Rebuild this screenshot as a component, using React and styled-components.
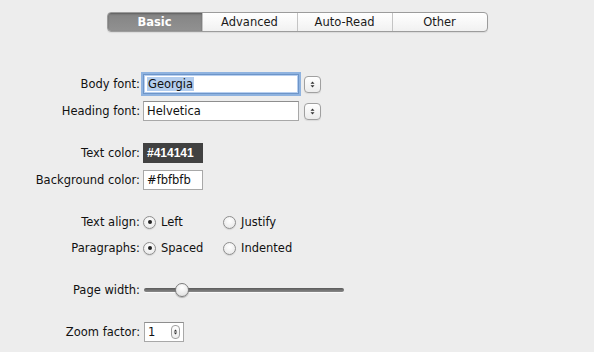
import React from "react";
import styled, { createGlobalStyle, css } from "styled-components";

const GlobalStyle = createGlobalStyle`
  html, body {
    margin: 0;
    padding: 0;
    background: #ededed;
  }
  body {
    font-family: "DejaVu Sans", "Liberation Sans", sans-serif;
    font-size: 11.5px;
    color: #111;
  }
`;

const Page = styled.div`
  width: 594px;
  height: 352px;
  padding-top: 12px;
  box-sizing: border-box;
  overflow: hidden;
`;

const TabBar = styled.div`
  display: flex;
  width: 381px;
  height: 20px;
  margin: 0 auto;
  box-sizing: border-box;
  border: 1px solid #9c9c9c;
  border-radius: 4px;
  overflow: hidden;
  background: linear-gradient(#ffffff, #f1f1f1);
  box-shadow: 0 1px 1px rgba(0, 0, 0, 0.08);
`;

const Segment = styled.div`
  flex: 1;
  display: flex;
  align-items: center;
  justify-content: center;
  font-size: 11.5px;
  color: #1a1a1a;
  & + & {
    border-left: 1px solid #c4c4c4;
  }
  ${(p) =>
    p.active &&
    css`
      background: linear-gradient(#848484, #919191);
      color: #fff;
      font-weight: bold;
      box-shadow: inset 0 1px 2px rgba(0, 0, 0, 0.3);
      & + div {
        border-left-color: #8a8a8a;
      }
    `}
`;

const Form = styled.div`
  margin-top: 42px;
  display: flex;
  flex-direction: column;
  gap: 22px;
`;

const Group = styled.div`
  display: flex;
  flex-direction: column;
  gap: ${(p) => p.gap || 7}px;
`;

const Row = styled.div`
  display: grid;
  grid-template-columns: 140px auto;
  column-gap: 3px;
  align-items: center;
  height: 20px;
`;

const Label = styled.div`
  text-align: right;
  white-space: nowrap;
`;

const Controls = styled.div`
  display: flex;
  align-items: center;
`;

const TextField = styled.div`
  width: ${(p) => p.w}px;
  height: 20px;
  box-sizing: border-box;
  background: #fff;
  border: 1px solid #a8a8a8;
  border-top-color: #8e8e8e;
  display: flex;
  align-items: center;
  padding-left: 3px;
  font-size: 11.5px;
  ${(p) =>
    p.focused &&
    css`
      border-color: #6d95c8;
      box-shadow: 0 0 0 2px #8fb3e0, inset 0 0 0 1px #b7cff0;
    `}
`;

const Selection = styled.span`
  background: #b3cdee;
  padding: 0 1px;
`;

const Swatch = styled.div`
  width: 60px;
  height: 20px;
  box-sizing: border-box;
  display: flex;
  align-items: center;
  padding-left: 4px;
  ${(p) =>
    p.dark
      ? css`
          background: #414141;
          color: #fff;
          font-family: "Liberation Sans", sans-serif;
          font-weight: bold;
          font-size: 12px;
        `
      : css`
          background: #fff;
          color: #111;
          border: 1px solid #a8a8a8;
          padding-left: 3px;
        `}
`;

const StepperButton = styled.div`
  width: 17px;
  height: 17px;
  margin-left: 5px;
  box-sizing: border-box;
  border: 1px solid #a0a0a0;
  border-radius: 4px;
  background: linear-gradient(#ffffff, #ececec);
  box-shadow: 0 1px 1px rgba(0, 0, 0, 0.08);
  display: flex;
  align-items: center;
  justify-content: center;
`;

const MiniStepper = styled.div`
  width: 9px;
  height: 14px;
  box-sizing: border-box;
  border: 1px solid #a0a0a0;
  border-radius: 4px;
  background: linear-gradient(#ffffff, #eeeeee);
  display: flex;
  align-items: center;
  justify-content: center;
`;

const Arrows = ({ size = 7 }) => (
  <svg width="5" height={size} viewBox="0 0 5 7">
    <path d="M2.5 0.5 L4.5 2.8 L0.5 2.8 Z M2.5 6.5 L4.5 4.2 L0.5 4.2 Z" fill="#333" />
  </svg>
);

const Option = styled.label`
  width: 80px;
  display: flex;
  align-items: center;
  gap: 5px;
`;

const RadioDot = styled.span`
  width: 13px;
  height: 13px;
  box-sizing: border-box;
  border-radius: 50%;
  border: 1px solid #8e8e8e;
  background: radial-gradient(circle at 50% 35%, #ffffff, #e4e4e4);
  box-shadow: 0 1px 1px rgba(0, 0, 0, 0.1);
  display: flex;
  align-items: center;
  justify-content: center;
  &::after {
    content: "";
    width: 4px;
    height: 4px;
    border-radius: 50%;
    background: ${(p) => (p.checked ? "#222" : "transparent")};
  }
`;

const Track = styled.div`
  position: relative;
  width: 200px;
  height: 4px;
  margin-left: 1px;
  border-radius: 2px;
  background: linear-gradient(#5a5a5a, #8a8a8a);
  box-shadow: 0 1px 0 rgba(255, 255, 255, 0.7);
`;

const Thumb = styled.div`
  position: absolute;
  top: 50%;
  width: 14px;
  height: 14px;
  margin-top: -7px;
  margin-left: -7px;
  box-sizing: border-box;
  border-radius: 50%;
  border: 1px solid #7c7c7c;
  background: radial-gradient(circle at 50% 30%, #ffffff, #dcdcdc);
  box-shadow: 0 1px 1px rgba(0, 0, 0, 0.25);
`;

const NumberField = styled(TextField)`
  justify-content: space-between;
  padding-right: 3px;
  margin-left: 1px;
`;

function Radio({ checked, children }) {
  return (
    <Option>
      <RadioDot checked={checked} />
      <span>{children}</span>
    </Option>
  );
}

export default function App() {
  const tabs = ["Basic", "Advanced", "Auto-Read", "Other"];
  const pageWidth = 0.19;

  return (
    <Page>
      <GlobalStyle />
      <TabBar>
        {tabs.map((t, i) => (
          <Segment key={t} active={i === 0}>
            {t}
          </Segment>
        ))}
      </TabBar>

      <Form>
        <Group>
          <Row>
            <Label>Body font:</Label>
            <Controls>
              <TextField w={156} focused>
                <Selection>Georgia</Selection>
              </TextField>
              <StepperButton>
                <Arrows />
              </StepperButton>
            </Controls>
          </Row>
          <Row>
            <Label>Heading font:</Label>
            <Controls>
              <TextField w={156}>Helvetica</TextField>
              <StepperButton>
                <Arrows />
              </StepperButton>
            </Controls>
          </Row>
        </Group>

        <Group>
          <Row>
            <Label>Text color:</Label>
            <Controls>
              <Swatch dark>#414141</Swatch>
            </Controls>
          </Row>
          <Row>
            <Label>Background color:</Label>
            <Controls>
              <Swatch>#fbfbfb</Swatch>
            </Controls>
          </Row>
        </Group>

        <Group gap={6}>
          <Row>
            <Label>Text align:</Label>
            <Controls>
              <Radio checked>Left</Radio>
              <Radio>Justify</Radio>
            </Controls>
          </Row>
          <Row>
            <Label>Paragraphs:</Label>
            <Controls>
              <Radio checked>Spaced</Radio>
              <Radio>Indented</Radio>
            </Controls>
          </Row>
        </Group>

        <Group>
          <Row>
            <Label>Page width:</Label>
            <Controls>
              <Track>
                <Thumb style={{ left: `${pageWidth * 100}%` }} />
              </Track>
            </Controls>
          </Row>
        </Group>

        <Group>
          <Row>
            <Label>Zoom factor:</Label>
            <Controls>
              <NumberField w={40}>
                <span>1</span>
                <MiniStepper>
                  <Arrows size={6} />
                </MiniStepper>
              </NumberField>
            </Controls>
          </Row>
        </Group>
      </Form>
    </Page>
  );
}
